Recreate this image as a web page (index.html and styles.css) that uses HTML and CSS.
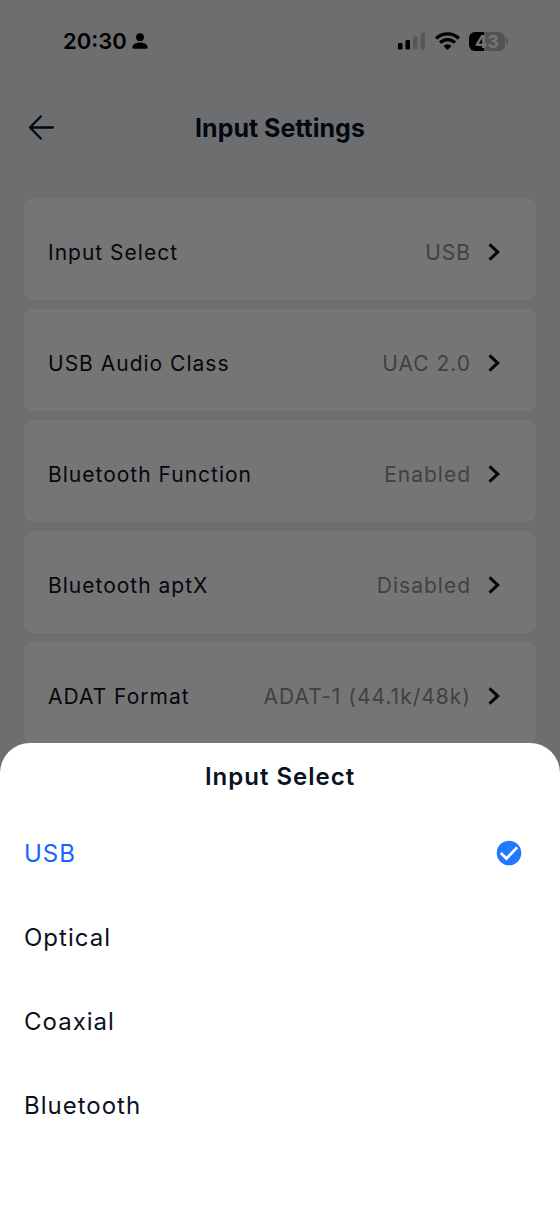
FILE: index.html
```
<!DOCTYPE html>
<html lang="en">
<head>
    <meta charset="UTF-8">
    <meta name="viewport" content="width=device-width, initial-scale=1.0">
    <title>Input Settings</title>
    <link rel="stylesheet" href="styles.css">
</head>
<body>
    <div class="screen">
        <div class="status-bar">
            <div class="status-left">
                <span class="time">20:30</span>
                <svg width="16" height="18" viewBox="0 0 16 18" fill="#000">
                    <circle cx="8" cy="5.200" r="3.900"/>
                    <path d="M8 10.500c4.600 0 7.600 2.200 7.600 4.800 0 1-.6 1.500-1.600 1.500H2c-1 0-1.600-.5-1.600-1.500 0-2.600 3-4.800 7.600-4.800z"/>
                </svg>
            </div>
            <div class="status-right">
                <svg width="28" height="18" viewBox="0 0 28 18">
                    <rect x="0" y="11" width="4.500" height="6.500" rx="1.300"/>
                    <rect x="7.500" y="8" width="4.500" height="9.500" rx="1.300"/>
                    <rect x="15" y="4.500" width="4.500" height="13" rx="1.300" fill="#bcbdbf"/>
                    <rect x="22.500" y="0.500" width="4.500" height="17" rx="1.300" fill="#bcbdbf"/>
                </svg>
                <svg width="25" height="18" viewBox="0 0 25 18">
                    <g fill="none" stroke="#000" stroke-width="3.300">
                        <path d="M1.200 6.500a16.200 16.200 0 0 1 22.600 0"/>
                        <path d="M5.100 10.700a10.500 10.500 0 0 1 14.800 0"/>
                    </g>
                    <path d="M12.500 17.900l-4-4a5.700 5.700 0 0 1 8 0z"/>
                </svg>
                <div class="battery">
                    <span class="battery-level">43</span>
                    <span class="battery-tip"></span>
                </div>
            </div>
        </div>

        <header class="header">
            <button class="back" aria-label="Back">
                <svg width="26" height="26" viewBox="0 0 26 26" fill="none" stroke="currentColor" stroke-width="2.300" stroke-linecap="round" stroke-linejoin="round">
                    <path d="M25 12.500H2M12.800 1.500L2 12.500l10.800 11"/>
                </svg>
            </button>
            <h1>Input Settings</h1>
        </header>

        <main class="settings">
            <button class="setting">
                <span>Input Select</span>
                <span class="value">USB</span>
                <svg class="chevron" viewBox="0 0 12 18"><path d="M1.500 1.300L9.800 9l-8.300 7.700"/></svg>
            </button>
            <button class="setting">
                <span>USB Audio Class</span>
                <span class="value">UAC 2.0</span>
                <svg class="chevron" viewBox="0 0 12 18"><path d="M1.500 1.300L9.800 9l-8.300 7.700"/></svg>
            </button>
            <button class="setting">
                <span>Bluetooth Function</span>
                <span class="value">Enabled</span>
                <svg class="chevron" viewBox="0 0 12 18"><path d="M1.500 1.300L9.800 9l-8.300 7.700"/></svg>
            </button>
            <button class="setting">
                <span>Bluetooth aptX</span>
                <span class="value">Disabled</span>
                <svg class="chevron" viewBox="0 0 12 18"><path d="M1.500 1.300L9.800 9l-8.300 7.700"/></svg>
            </button>
            <button class="setting">
                <span>ADAT Format</span>
                <span class="value">ADAT-1 (44.1k/48k)</span>
                <svg class="chevron" viewBox="0 0 12 18"><path d="M1.500 1.300L9.800 9l-8.300 7.700"/></svg>
            </button>
        </main>
    </div>

    <div class="overlay"></div>

    <!-- Bottom sheet -->
    <form class="sheet" role="dialog" aria-labelledby="sheet-title">
        <h2 id="sheet-title">Input Select</h2>
        <label class="option">
            <input type="radio" name="input" value="usb" checked>
            <span>USB</span>
            <svg class="check" viewBox="0 0 26 26"><circle cx="13" cy="13" r="12.300"/><path d="M4.800 13l5.600 5.600L21.200 7.400"/></svg>
        </label>
        <label class="option">
            <input type="radio" name="input" value="optical">
            <span>Optical</span>
            <svg class="check" viewBox="0 0 26 26"><circle cx="13" cy="13" r="12.300"/><path d="M4.800 13l5.600 5.600L21.200 7.400"/></svg>
        </label>
        <label class="option">
            <input type="radio" name="input" value="coaxial">
            <span>Coaxial</span>
            <svg class="check" viewBox="0 0 26 26"><circle cx="13" cy="13" r="12.300"/><path d="M4.800 13l5.600 5.600L21.200 7.400"/></svg>
        </label>
        <label class="option">
            <input type="radio" name="input" value="bluetooth">
            <span>Bluetooth</span>
            <svg class="check" viewBox="0 0 26 26"><circle cx="13" cy="13" r="12.300"/><path d="M4.800 13l5.600 5.600L21.200 7.400"/></svg>
        </label>
    </form>
</body>
</html>
```
FILE: styles.css
```
* {
    margin: 0;
    padding: 0;
    box-sizing: border-box;
    font-family: Inter, 'Liberation Sans', sans-serif;
}

body {
    background: #eef0f4;
    color: #08131f;
    min-height: 100vh;
}

button {
    background: none;
    border: none;
    color: inherit;
    cursor: pointer;
}

/* Status bar */
.status-bar {
    display: flex;
    justify-content: space-between;
    align-items: center;
    height: 82px;
    padding: 0 52px 0 63px;
    color: #000;
}

.status-left,
.status-right {
    display: flex;
    align-items: center;
}

.status-left {
    gap: 5px;
}

.status-right {
    gap: 9px;
}

.time {
    font-size: 22px;
    font-weight: 600;
}

.battery {
    display: flex;
    align-items: center;
    gap: 1px;
}

.battery-level {
    width: 36px;
    height: 19px;
    border-radius: 6px;
    background: linear-gradient(to right, #000 43%, #b4b5b7 43%);
    color: #fff;
    font-size: 18px;
    font-weight: 700;
    line-height: 19px;
    text-align: center;
}

.battery-tip {
    width: 2px;
    height: 6px;
    border-radius: 0 2px 2px 0;
    background: #b4b5b7;
}

/* Header */
.header {
    display: grid;
    grid-template-columns: 26px 1fr 26px;
    align-items: center;
    height: 92px;
    padding: 0 28px;
}

.header h1 {
    font-size: 25px;
    font-weight: 700;
    text-align: center;
}

.back svg {
    display: block;
}

/* Settings list */
.settings {
    display: flex;
    flex-direction: column;
    gap: 9px;
    padding: 24px 24px 0;
}

.setting {
    display: flex;
    align-items: center;
    height: 102px;
    padding: 6px 36px 0 24px;
    border-radius: 9px;
    background: #fff;
    font-size: 21px;
    letter-spacing: 1px;
}

.value {
    margin-left: auto;
    color: #8e8e96;
}

.chevron {
    width: 12px;
    height: 18px;
    margin-left: 17px;
    fill: none;
    stroke: currentColor;
    stroke-width: 3.100;
}

/* Bottom sheet */
.overlay {
    position: fixed;
    inset: 0;
    background: rgba(0, 0, 0, 0.54);
}

.sheet {
    position: fixed;
    left: 0;
    right: 0;
    bottom: 0;
    padding-bottom: 66px;
    border-radius: 30px 30px 0 0;
    background: #fff;
    letter-spacing: 1px;
}

.sheet h2 {
    font-size: 24px;
    font-weight: 600;
    line-height: 68px;
    text-align: center;
}

.option {
    display: flex;
    justify-content: space-between;
    align-items: center;
    height: 84px;
    padding: 0 38px 0 24px;
    font-size: 24px;
    cursor: pointer;
}

.option input {
    position: absolute;
    opacity: 0;
}

.option input:checked + span {
    color: #1466ff;
}

.check {
    display: none;
    width: 26px;
    height: 26px;
    fill: #2478ff;
}

.check path {
    fill: none;
    stroke: #fff;
    stroke-width: 2.800;
}

.option input:checked ~ .check {
    display: block;
}
```
